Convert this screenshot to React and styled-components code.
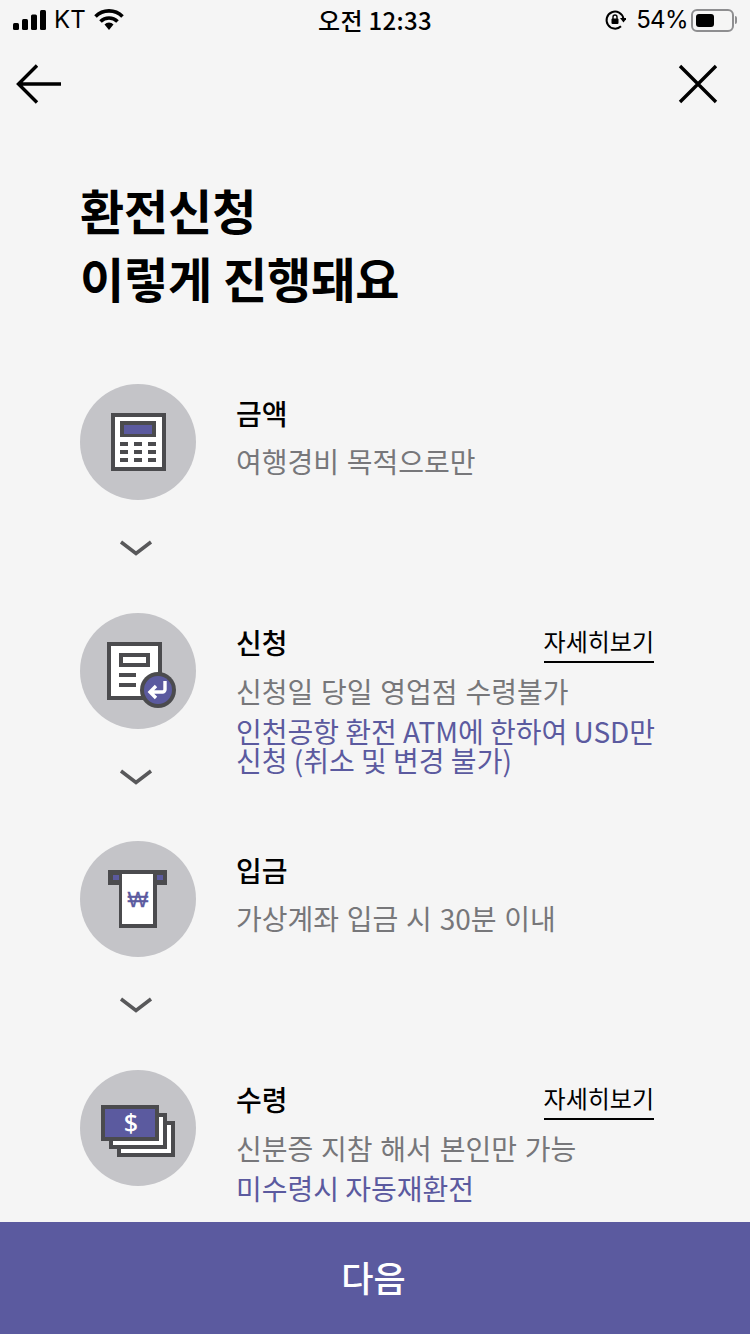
import React from "react";
import styled, { createGlobalStyle } from "styled-components";

const FONT = `"Noto Sans CJK KR", "Noto Sans", sans-serif`;
const DARK = "#4b4b4e";
const PURPLE = "#5b5a9f";

const GlobalStyle = createGlobalStyle`
  html, body {
    margin: 0;
    padding: 0;
    background: #f5f5f5;
  }
  * {
    box-sizing: border-box;
  }
`;

const CalculatorIcon = () => (
  <IconSvg viewBox="0 0 116 116">
    <rect x="31" y="29" width="55" height="58" fill={DARK} />
    <rect x="35" y="33" width="47" height="50" fill="#fff" />
    <rect x="40" y="37" width="36" height="16" fill={DARK} />
    <rect x="44" y="41" width="28" height="9" fill={PURPLE} />
    {[58, 66, 74].map((y) =>
      [40, 54, 68].map((x) => (
        <rect key={`${x}-${y}`} x={x} y={y} width="8" height="4" fill={DARK} />
      ))
    )}
  </IconSvg>
);

const FormIcon = () => (
  <IconSvg viewBox="0 0 116 116">
    <rect x="27" y="29" width="55" height="58" fill={DARK} />
    <rect x="31" y="33" width="47" height="50" fill="#fff" />
    <rect x="39" y="40" width="31" height="14" fill={DARK} />
    <rect x="43" y="44" width="23" height="6" fill="#fff" />
    <rect x="39" y="60" width="17" height="4" fill={DARK} />
    <rect x="39" y="70" width="17" height="4" fill={DARK} />
    <circle cx="78" cy="77" r="18" fill={DARK} />
    <circle cx="78" cy="77" r="14" fill={PURPLE} />
    <path
      d="M85 68v8.5a2.5 2.5 0 0 1-2.5 2.500H71M76 73l-6 6 6 6"
      fill="none"
      stroke="#fff"
      strokeWidth="3.4"
    />
  </IconSvg>
);

const AtmIcon = () => (
  <IconSvg viewBox="0 0 116 116">
    <rect x="28" y="29" width="59" height="15" fill={DARK} />
    <rect x="33" y="34" width="6" height="5" fill={PURPLE} />
    <rect x="77" y="34" width="6" height="5" fill={PURPLE} />
    <rect x="39" y="33" width="38" height="54" fill={DARK} />
    <rect x="42" y="33" width="31" height="50" fill="#fff" />
    <WonText x="58" y="66">₩</WonText>
  </IconSvg>
);

const MoneyIcon = () => (
  <IconSvg viewBox="0 0 116 116">
    <rect x="37" y="51" width="58" height="36" fill={DARK} />
    <rect x="41" y="55" width="50" height="28" fill="#fff" />
    <rect x="29" y="43" width="58" height="36" fill={DARK} />
    <rect x="33" y="47" width="50" height="28" fill="#fff" />
    <rect x="21" y="35" width="58" height="36" fill={DARK} />
    <rect x="25" y="39" width="50" height="28" fill={PURPLE} />
    <DollarText x="51" y="62">$</DollarText>
  </IconSvg>
);

const STEPS = [
  {
    title: "금액",
    icon: <CalculatorIcon />,
    desc: "여행경비 목적으로만",
  },
  {
    title: "신청",
    icon: <FormIcon />,
    desc: "신청일 당일 영업점 수령불가",
    note: "인천공항 환전 ATM에 한하여 USD만 신청 (취소 및 변경 불가)",
    more: true,
  },
  {
    title: "입금",
    icon: <AtmIcon />,
    desc: "가상계좌 입금 시 30분 이내",
  },
  {
    title: "수령",
    icon: <MoneyIcon />,
    desc: "신분증 지참 해서 본인만 가능",
    note: "미수령시 자동재환전",
    more: true,
    last: true,
  },
];

const App = () => {
  return (
    <>
      <GlobalStyle />
      <Page>
        <StatusBar>
          <StatusLeft>
            <svg width="35" height="20" viewBox="0 0 35 20">
              <rect x="0" y="13" width="6" height="7" rx="1.500" fill="#000" />
              <rect x="9" y="9" width="6" height="11" rx="1.500" fill="#000" />
              <rect x="18" y="4.500" width="6" height="15.500" rx="1.500" fill="#000" />
              <rect x="27" y="0" width="6" height="20" rx="1.500" fill="#000" />
            </svg>
            <span>KT</span>
            <WifiSvg width="30" height="22" viewBox="0 0 30 22">
              <path d="M1.500 7.500a19 19 0 0 1 27 0" fill="none" stroke="#000" strokeWidth="3.600" />
              <path d="M6.500 12.500a12 12 0 0 1 17 0" fill="none" stroke="#000" strokeWidth="3.600" />
              <path d="M10.500 15.500a6 6 0 0 1 9 0L15 21z" fill="#000" />
            </WifiSvg>
          </StatusLeft>
          <StatusTime>오전 12:33</StatusTime>
          <StatusRight>
            <svg width="22" height="22" viewBox="0 0 22 22">
              <path
                d="M17 17.200A8.500 8.500 0 1 1 19.400 9.500"
                fill="none"
                stroke="#000"
                strokeWidth="2"
              />
              <path d="M16 9h7l-3.500 4.500z" fill="#000" />
              <rect x="7.500" y="9.500" width="7" height="5.500" rx="1" fill="#000" />
              <path d="M9 10V8a2 2 0 0 1 4 0v2" fill="none" stroke="#000" strokeWidth="1.400" />
            </svg>
            <span>54%</span>
            <Battery>
              <BatteryLevel />
            </Battery>
          </StatusRight>
        </StatusBar>

        <NavBar>
          <svg width="46" height="40" viewBox="0 0 46 40">
            <path d="M45 20H3M21 1.500L2.500 20 21 38.500" fill="none" stroke="#000" strokeWidth="3.400" />
          </svg>
          <svg width="40" height="40" viewBox="0 0 40 40">
            <path d="M2 2l36 36M38 2L2 38" fill="none" stroke="#000" strokeWidth="3.400" />
          </svg>
        </NavBar>

        <Heading>
          환전신청
          <br />
          이렇게 진행돼요
        </Heading>

        <StepList>
          {STEPS.map((step) => (
            <Step key={step.title}>
              <StepMarker>
                <Circle>{step.icon}</Circle>
                {!step.last && (
                  <Chevron viewBox="0 0 34 16">
                    <path d="M2 2l15 11.500L32 2" fill="none" stroke="#58585a" strokeWidth="3.500" />
                  </Chevron>
                )}
              </StepMarker>
              <StepBody>
                <TitleRow>
                  <StepTitle>{step.title}</StepTitle>
                  {step.more && <MoreLink>자세히보기</MoreLink>}
                </TitleRow>
                <StepDesc>{step.desc}</StepDesc>
                {step.note && <StepNote>{step.note}</StepNote>}
              </StepBody>
            </Step>
          ))}
        </StepList>

        <NextButton>다음</NextButton>
      </Page>
    </>
  );
};

const Page = styled.div`
  width: 750px;
  height: 1334px;
  display: flex;
  flex-direction: column;
  overflow: hidden;
  background: #f5f5f5;
  color: #000;
  font-family: ${FONT};
`;

const StatusBar = styled.div`
  height: 40px;
  flex: none;
  display: grid;
  grid-template-columns: 1fr auto 1fr;
  align-items: center;
  padding: 0 13px;
  font-size: 24px;
  line-height: 30px;
`;

const StatusLeft = styled.div`
  display: flex;
  align-items: center;
  gap: 6px;
  font-family: "Inter", "Liberation Sans", sans-serif;
`;

const WifiSvg = styled.svg`
  margin-left: 2px;
`;

const StatusTime = styled.div`
  font-weight: 500;
  font-size: 24px;
  letter-spacing: 0.3px;
`;

const StatusRight = styled.div`
  display: flex;
  align-items: center;
  justify-content: flex-end;
  gap: 9px;
  padding-right: 3px;
  font-family: "Inter", "Liberation Sans", sans-serif;
  svg {
    margin-right: 1px;
  }
  span {
    margin-right: -6px;
    letter-spacing: -0.6px;
  }
`;

const Battery = styled.div`
  position: relative;
  width: 43px;
  height: 23px;
  padding: 3px;
  border: 2px solid #8e8e90;
  border-radius: 6px;
  &::after {
    content: "";
    position: absolute;
    top: 5px;
    right: -5px;
    width: 2px;
    height: 8px;
    border-radius: 0 2px 2px 0;
    background: #8e8e90;
  }
`;

const BatteryLevel = styled.div`
  width: 54%;
  height: 100%;
  border-radius: 3px;
  background: #000;
`;

const NavBar = styled.div`
  height: 88px;
  flex: none;
  display: flex;
  align-items: center;
  justify-content: space-between;
  padding: 0 32px 0 16px;
`;

const Heading = styled.h1`
  flex: none;
  margin: 47px 0 73px;
  padding-left: 80px;
  font-size: 48px;
  line-height: 68px;
  font-weight: 700;
  letter-spacing: -0.1px;
`;

const StepList = styled.div`
  flex: 1;
  min-height: 0;
  padding: 0 96px 0 80px;
`;

const Step = styled.div`
  height: 228.6px;
  display: grid;
  grid-template-columns: 116px 1fr;
  column-gap: 40px;
`;

const StepMarker = styled.div`
  display: flex;
  flex-direction: column;
  align-items: center;
`;

const Circle = styled.div`
  width: 116px;
  height: 116px;
  flex: none;
  border-radius: 50%;
  background: #c4c4c8;
`;

const IconSvg = styled.svg`
  display: block;
  width: 116px;
  height: 116px;
`;

const WonText = styled.text`
  font-family: "Liberation Sans", sans-serif;
  font-size: 22px;
  fill: ${PURPLE};
  stroke: ${PURPLE};
  stroke-width: 0.3px;
  text-anchor: middle;
`;

const DollarText = styled.text`
  font-family: "Noto Sans", sans-serif;
  font-size: 25px;
  font-weight: 500;
  fill: #fff;
  text-anchor: middle;
`;

const Chevron = styled.svg`
  width: 34px;
  height: 16px;
  margin: 40px 4px 0 0;
`;

const StepBody = styled.div`
  padding-top: 9px;
`;

const TitleRow = styled.div`
  display: flex;
  align-items: flex-start;
  justify-content: space-between;
`;

const StepTitle = styled.div`
  font-size: 28px;
  line-height: 40px;
  font-weight: 500;
`;

const MoreLink = styled.a`
  margin-top: 1px;
  font-size: 24px;
  line-height: 36px;
  padding-bottom: 2px;
  border-bottom: 2px solid #000;
  color: #000;
`;

const StepDesc = styled.div`
  margin-top: 8px;
  font-size: 28px;
  line-height: 40px;
  word-spacing: 1.5px;
  color: #77777a;
`;

const StepNote = styled.div`
  width: calc(100% + 6px);
  margin-top: 6px;
  font-size: 28px;
  line-height: 29px;
  word-break: keep-all;
  color: ${PURPLE};
`;

const NextButton = styled.button`
  flex: none;
  height: 112px;
  width: 100%;
  padding: 0 3px 4px 0;
  border: 0;
  background: ${PURPLE};
  color: #fff;
  font-family: ${FONT};
  font-size: 35px;
  font-weight: 500;
`;

export default App;
